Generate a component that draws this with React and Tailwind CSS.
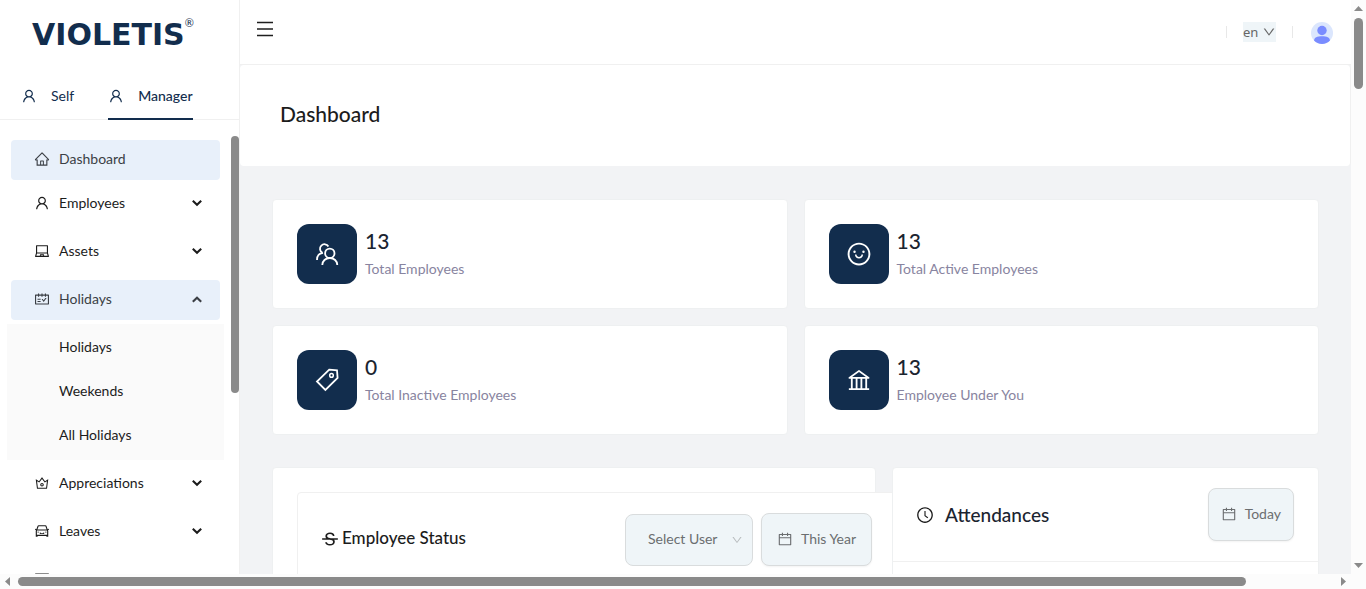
import React, { useState } from "react";
import {
  AiOutlineUser,
  AiOutlineHome,
  AiOutlineLaptop,
  AiOutlineSchedule,
  AiOutlineCrown,
  AiOutlineCar,
  AiOutlineSmile,
  AiOutlineBank,
  AiOutlineStrikethrough,
  AiOutlineClockCircle,
  AiOutlineCalendar,
  AiOutlineDown,
  AiOutlineCreditCard,
} from "react-icons/ai";

function Chevron({ open }) {
  return (
    <svg viewBox="0 0 10 8" className="h-2 w-2.5" fill="none" stroke="currentColor" strokeWidth="2.1" aria-hidden="true">
      {open ? <path d="M0.8 6.8 5 2.8l4.2 4" /> : <path d="M0.8 1.8 5 5.8l4.2-4" />}
    </svg>
  );
}

function PeopleIcon() {
  return (
    <svg viewBox="0 0 24 24" className="size-6" fill="none" stroke="currentColor" strokeWidth="1.8" aria-hidden="true">
      <circle cx="14.8" cy="11.3" r="4.7" />
      <path d="M7.3 23c0-4 3.3-7 7.5-7s7.500 3 7.500 7" />
      <path d="M13.400 4.500A4.500 4.500 0 1 0 7.200 10.600" />
      <path d="M2 18c0-3.700 2.200-6.700 6-7.200" />
    </svg>
  );
}

function TagIcon() {
  return (
    <svg viewBox="0 0 24 24" className="size-6" fill="none" stroke="currentColor" strokeWidth="1.8" aria-hidden="true">
      <path d="M14.200 1.700 22 2.300l.6 7.700-12.200 12L2 13.500Z" />
      <circle cx="16.500" cy="7.400" r="1.800" strokeWidth="1.500" />
    </svg>
  );
}

function MenuRow({ icon: Icon, label, active, open, group, onClick }) {
  return (
    <button
      type="button"
      onClick={onClick}
      aria-expanded={group ? open : undefined}
      className={
        "mx-1 flex h-10 shrink-0 items-center gap-[9px] rounded pb-0.5 pl-[23px] pr-[18px] text-left " +
        (active ? "bg-[#e8f0fa] text-[#3b3f45]" : "text-[#1c1c1c]") +
        (group ? " my-1" : "")
      }
    >
      <Icon className="size-4" />
      <span className="flex-1">{label}</span>
      {group && <Chevron open={open} />}
    </button>
  );
}

function Sidebar() {
  const [open, setOpen] = useState(true);
  return (
    <aside className="flex w-60 shrink-0 flex-col border-r border-[#f0f0f0] bg-white">
      <div className="flex h-[72px] shrink-0 items-start pl-8 pt-[17px] text-[#122d4d]">
        <span className="font-['DejaVu_Sans',sans-serif] text-[30px] font-bold leading-9">VIOLETIS</span>
        <span className="text-[11px] leading-3">®</span>
      </div>
      <div role="tablist" className="flex h-12 shrink-0 items-stretch gap-[34px] border-b border-[#f0f0f0] pl-[21px] text-[#122d4d]">
        <button type="button" role="tab" aria-selected="false" className="-mb-px flex items-center gap-3.5 border-b-2 border-transparent pt-0.5">
          <AiOutlineUser className="size-4" />
          Self
        </button>
        <button type="button" role="tab" aria-selected="true" className="-mb-px flex items-center gap-3.5 border-b-2 border-[#122d4d] pt-0.5 font-medium">
          <AiOutlineUser className="size-4" />
          Manager
        </button>
      </div>
      <div className="flex min-h-0 flex-1">
        <nav className="flex flex-1 flex-col overflow-hidden px-[7px] pt-5">
          <MenuRow icon={AiOutlineHome} label="Dashboard" active />
          <MenuRow icon={AiOutlineUser} label="Employees" group open={false} />
          <MenuRow icon={AiOutlineLaptop} label="Assets" group open={false} />
          <MenuRow icon={AiOutlineSchedule} label="Holidays" group active open={open} onClick={() => setOpen(!open)} />
          {open && (
            <div className="flex shrink-0 flex-col gap-1 bg-[#fafafa] py-1 text-[#1c1c1c]">
              {["Holidays", "Weekends", "All Holidays"].map((t) => (
                <a key={t} href="#" className="flex h-10 items-center pb-0.5 pl-[52px]">
                  {t}
                </a>
              ))}
            </div>
          )}
          <MenuRow icon={AiOutlineCrown} label="Appreciations" group open={false} />
          <MenuRow icon={AiOutlineCar} label="Leaves" group open={false} />
          <MenuRow icon={AiOutlineCreditCard} label="" group open={false} />
        </nav>
        <div className="mt-4 h-[257px] w-2 rounded-full bg-[#8a8a8a]" />
      </div>
    </aside>
  );
}

function TopBar() {
  return (
    <header className="flex h-[65px] shrink-0 items-center border-b border-[#f0f0f0] bg-white pl-[17px] pr-[18px]">
      <button type="button" aria-label="Toggle menu" className="mb-1.5">
        <svg viewBox="0 0 16 16" className="size-4" stroke="#1f1f1f" strokeWidth="1.5" aria-hidden="true">
          <path d="M0 1.500h16M0 8h16M0 14.500h16" />
        </svg>
      </button>
      <div className="ml-auto flex items-center">
        <span className="h-3 w-px bg-[#e8e8e8]" />
        <div className="relative ml-4 flex items-center bg-[#eff5f8] text-[#666]">
          <select aria-label="Language" className="h-5 w-[33px] appearance-none bg-transparent pb-0.5 font-['Noto_Sans',sans-serif] text-[13px] leading-5">
            <option>en</option>
          </select>
          <AiOutlineDown className="pointer-events-none absolute right-0 size-3.5" />
        </div>
        <span className="ml-4 h-3 w-px bg-[#e8e8e8]" />
        <button type="button" aria-label="Account" className="ml-[18px] mt-0.5">
          <svg viewBox="0 0 22 22" className="size-[22px]" aria-hidden="true">
            <circle cx="11" cy="11" r="11" fill="#dbe6fd" />
            <circle cx="11" cy="8.500" r="4.700" fill="#7a8cff" />
            <path d="M3 18.500c.3-3 3-4.300 8-4.300s7.700 1.300 8 4.300A11 11 0 0 1 11 22a11 11 0 0 1-8-3.500Z" fill="#7a8cff" />
          </svg>
        </button>
      </div>
    </header>
  );
}

function StatCard({ icon, value, label }) {
  return (
    <div className="flex items-center gap-2 rounded border border-[#eef0f1] bg-white p-6">
      <div className="flex size-15 items-center justify-center rounded-xl bg-[#122d4d] text-white">{icon}</div>
      <div>
        <div className="text-[21px] leading-7 font-medium text-[#1b2430]">{value}</div>
        <div className="mt-0.5 leading-6 text-[#8884a0]">{label}</div>
      </div>
    </div>
  );
}

function DateButton({ wide, children }) {
  return (
    <button
      type="button"
      className={
        "flex h-[53px] items-center gap-2 rounded-lg border border-[#d9dcdd] bg-[#eff5f8] pb-0.5 text-[#6b6e70] shadow-xs " +
        (wide ? "px-[15px]" : "px-3")
      }
    >
      <AiOutlineCalendar className="size-4" />
      {children}
    </button>
  );
}

function Panels() {
  return (
    <div className="-mx-2 mt-8 flex items-stretch">
      <div className="w-7/12 px-2">
        <section className="rounded border border-[#eef0f1] bg-white p-6 pb-0">
          <div className="-mr-[46px] flex h-60 items-start rounded border border-[#f0f0f0] bg-white pl-[23px] pr-6 pt-5">
            <h2 className="flex h-[53px] items-center gap-[3px] pb-0.5 text-[17px] font-medium text-[#1c1c1c]">
              <AiOutlineStrikethrough className="size-[18px]" />
              Employee Status
            </h2>
            <div className="ml-auto flex items-end gap-2">
              <div className="relative flex items-center">
                <select aria-label="User" className="h-[52px] w-32 appearance-none rounded-lg border border-[#d9dcdd] bg-[#eff5f8] pb-0.5 pl-[22px] text-[#6b6e70]">
                  <option>Select User</option>
                </select>
                <AiOutlineDown className="pointer-events-none absolute right-2.5 size-3 text-[#b8bcbe]" />
              </div>
              <DateButton wide>This Year</DateButton>
            </div>
          </div>
        </section>
      </div>
      <div className="relative w-5/12 px-2">
        <section className="h-full rounded border border-[#eef0f1] bg-white">
          <div className="flex items-center gap-[11px] border-b border-[#f0f0f0] py-5 pl-[23px] pr-6">
            <AiOutlineClockCircle className="size-[18px] text-[#1c1c1c]" />
            <h2 className="flex-1 text-[19px] font-medium text-[#1b2430]">Attendances</h2>
            <DateButton>Today</DateButton>
          </div>
        </section>
      </div>
    </div>
  );
}

export default function App() {
  return (
    <div className="flex h-screen flex-col overflow-hidden bg-[#fcfcfc] font-[Lato,sans-serif] text-sm">
      <div className="flex min-h-0 flex-1">
        <Sidebar />
        <main className="flex min-w-0 flex-1 flex-col overflow-hidden bg-[#f2f3f5]">
          <TopBar />
          <div className="flex h-[101px] shrink-0 items-center rounded border-r border-[#f0f0f0] bg-white px-10 pb-1">
            <h1 className="text-[21px] font-medium text-[#1c1c1c]">Dashboard</h1>
          </div>
          <div className="min-h-0 flex-1 overflow-hidden px-8 pt-[33px]">
            <div className="grid grid-cols-2 gap-4">
              <StatCard icon={<PeopleIcon />} value="13" label="Total Employees" />
              <StatCard icon={<AiOutlineSmile className="size-[26px]" />} value="13" label="Total Active Employees" />
              <StatCard icon={<TagIcon />} value="0" label="Total Inactive Employees" />
              <StatCard icon={<AiOutlineBank className="size-[26px]" />} value="13" label="Employee Under You" />
            </div>
            <Panels />
          </div>
        </main>
        <div className="flex w-[15px] shrink-0 flex-col items-center py-1.5" aria-hidden="true">
          <svg viewBox="0 0 9 5" className="h-[5px] w-[9px]" fill="#8a8a8a"><path d="M0 5 4.500 0 9 5Z" /></svg>
          <div className="mt-[7px] h-[71px] w-[9px] rounded-full bg-[#8a8a8a]" />
          <svg viewBox="0 0 9 5" className="mt-auto h-[5px] w-[9px]" fill="#8a8a8a"><path d="M0 0 4.500 5 9 0Z" /></svg>
        </div>
      </div>
      <div className="mr-[15px] flex h-[15px] shrink-0 items-center px-[5px]" aria-hidden="true">
        <svg viewBox="0 0 5 9" className="h-[9px] w-[5px]" fill="#8a8a8a"><path d="M5 0 0 4.500 5 9Z" /></svg>
        <div className="ml-2 mr-[95px] h-[9px] flex-1 rounded-full bg-[#8a8a8a]" />
        <svg viewBox="0 0 5 9" className="h-[9px] w-[5px]" fill="#8a8a8a"><path d="M0 0 5 4.500 0 9Z" /></svg>
      </div>
    </div>
  );
}
